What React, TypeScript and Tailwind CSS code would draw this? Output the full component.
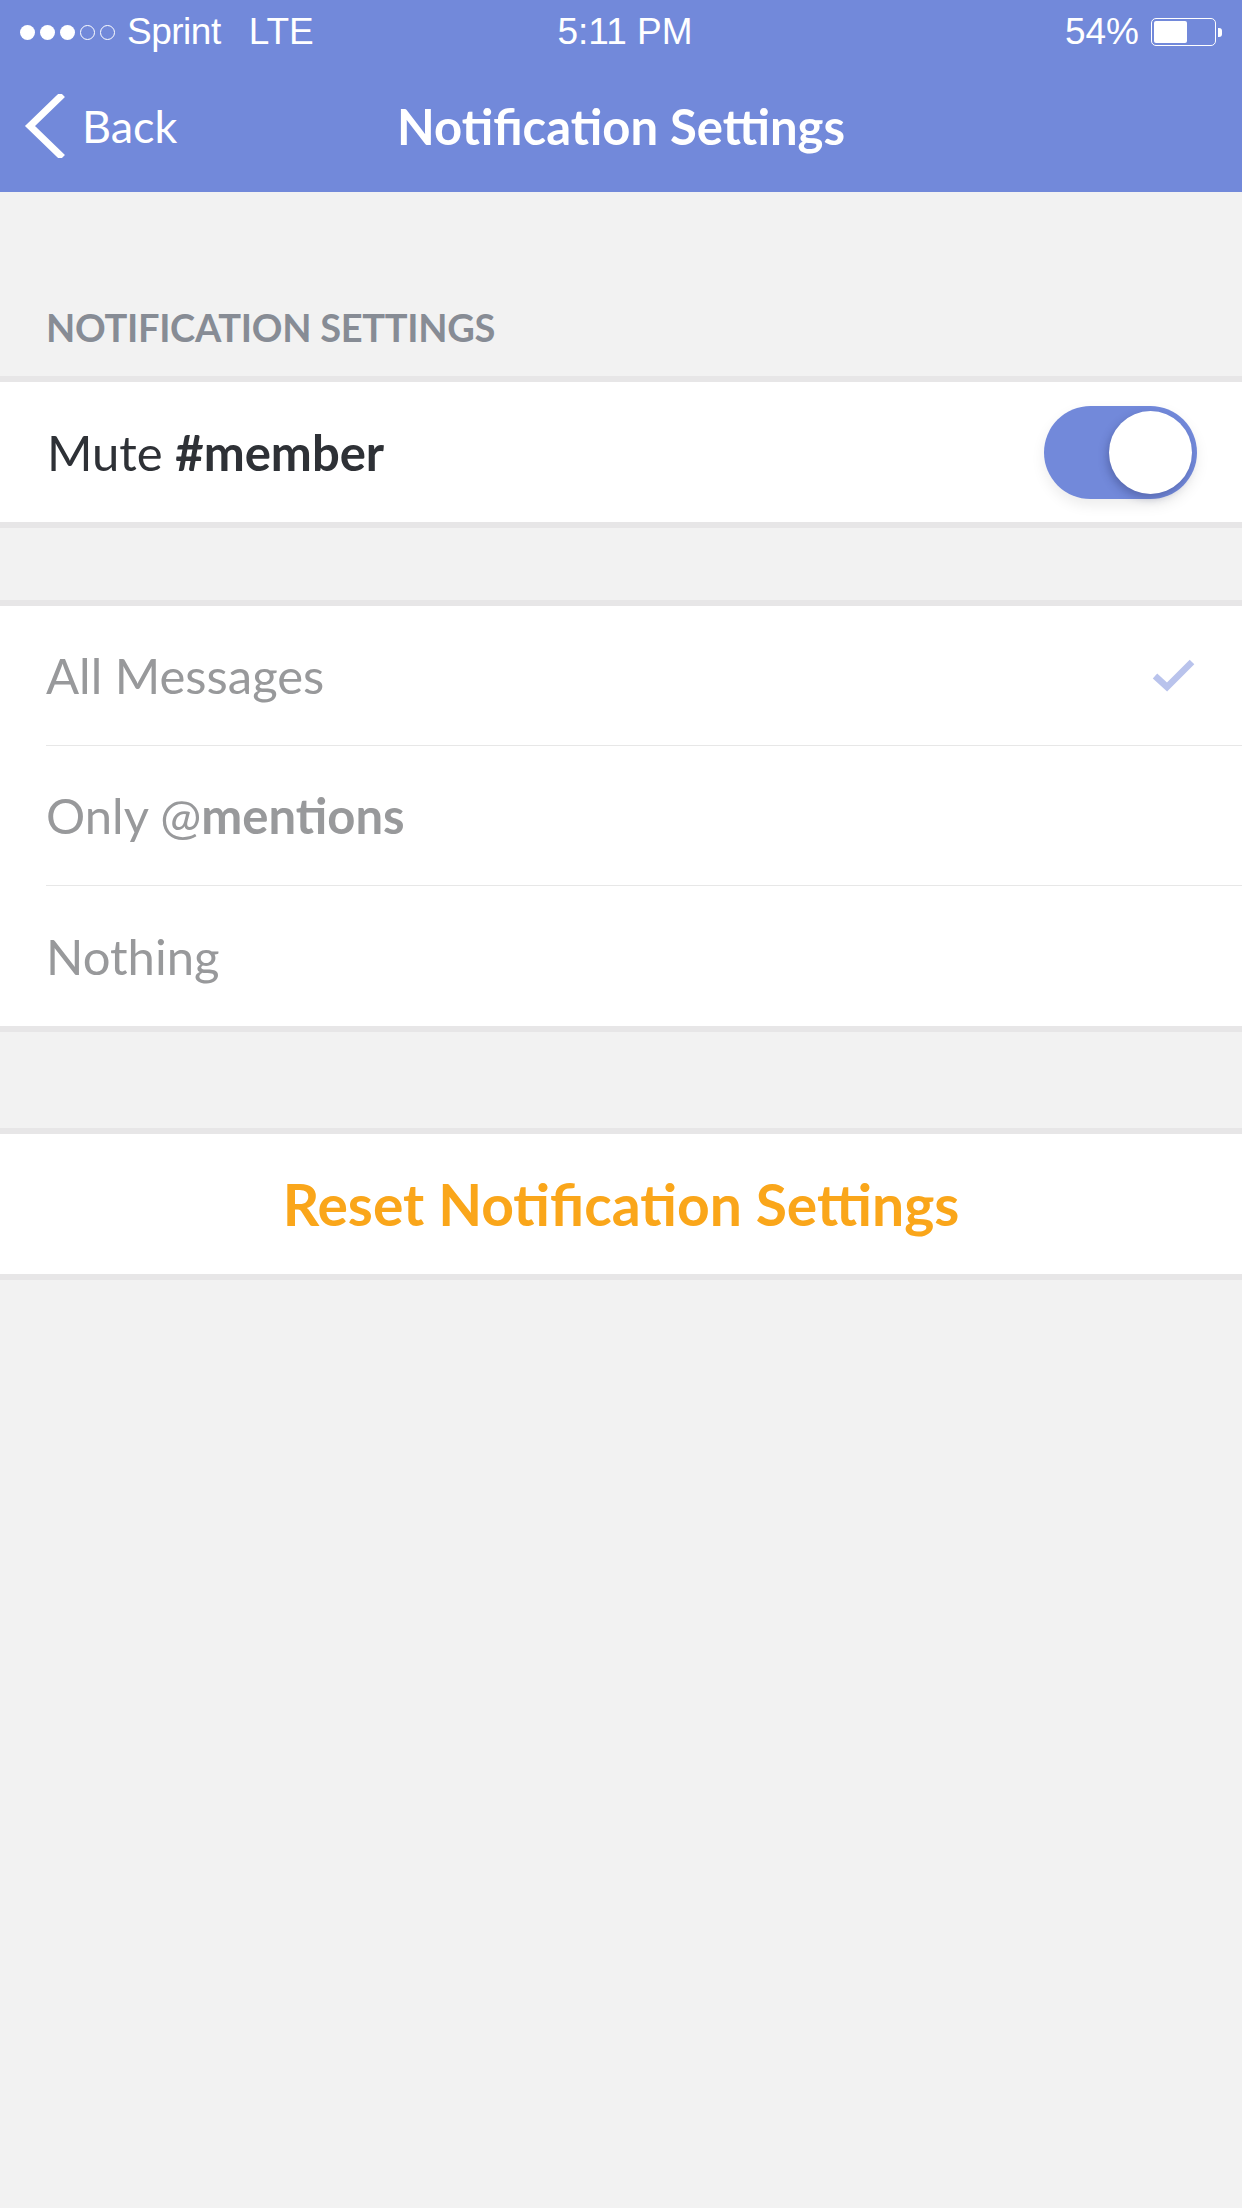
import React from "react";

const Dot = ({ filled }: { filled: boolean }) => (
  <span
    className={
      filled
        ? "w-[15px] h-[15px] rounded-full bg-white"
        : "w-[15px] h-[15px] rounded-full border-[1.5px] border-white"
    }
  />
);

const StatusBar = () => (
  <div className="h-[60px] pt-[4px] flex items-center px-[20px] text-white text-[37px] font-['Liberation_Sans',sans-serif] relative">
    <div className="flex items-center gap-[5px]">
      <Dot filled />
      <Dot filled />
      <Dot filled />
      <Dot filled={false} />
      <Dot filled={false} />
    </div>
    <span className="ml-[12px] tracking-[-0.5px]">Sprint</span>
    <span className="ml-[28px]">LTE</span>
    <span className="absolute left-0 right-0 text-center pl-[8px] pointer-events-none">5:11 PM</span>
    <div className="ml-auto flex items-center">
      <span className="mr-[12px]">54%</span>
      <div className="w-[65px] h-[28px] rounded-[5px] border-[1.5px] border-white p-[2px] flex">
        <div className="w-[33px] h-full bg-white rounded-[2px]" />
      </div>
      <div className="w-[4px] h-[9px] bg-white rounded-r-[3px] ml-[2px]" />
    </div>
  </div>
);

const NavBar = () => (
  <div className="h-[132px] relative flex items-center text-white">
    <div className="flex items-center pl-[24px]">
      <svg width="42" height="64" viewBox="0 0 42 64" fill="none">
        <path d="M36 3 L6 32 L36 61" stroke="white" strokeWidth="7" strokeLinecap="square" />
      </svg>
      <span className="ml-[16px] text-[45px] leading-none">Back</span>
    </div>
    <span className="absolute left-0 right-0 text-center text-[49px] font-bold leading-none pointer-events-none">
      Notification Settings
    </span>
  </div>
);

const Toggle = () => (
  <div className="relative w-[153px] h-[93px] rounded-full bg-[#7289da] shadow-[0_6px_14px_rgba(0,0,0,0.08)]">
    <div className="absolute right-[5px] top-[5px] w-[83px] h-[83px] rounded-full bg-white shadow-[-2px_4px_8px_rgba(40,50,100,0.35)]" />
  </div>
);

const Check = () => (
  <svg width="44" height="34" viewBox="0 0 44 34" fill="none">
    <path d="M3 17 L15 28 L40 3" stroke="#b9c3ec" strokeWidth="6.5" />
  </svg>
);

const options = ["All Messages", "Only", "Nothing"];

export default function App() {
  return (
    <div className="w-[1242px] min-h-[2208px] bg-[#f2f2f2] font-['Lato',sans-serif]">
      <div className="bg-[#7289da]">
        <StatusBar />
        <NavBar />
      </div>

      <div className="h-[184px] flex items-end pb-[30px] pl-[46px]">
        <span className="text-[38px] font-bold text-[#878c95] leading-none tracking-[-0.3px]">
          NOTIFICATION SETTINGS
        </span>
      </div>

      <div className="bg-white border-y-[6px] border-[#e7e6e7] h-[152px] flex items-center justify-between pl-[47px] pr-[45px]">
        <span className="text-[49px] text-[#2e3136] leading-none">
          Mute <span className="font-bold">#member</span>
        </span>
        <Toggle />
      </div>

      <div className="h-[72px]" />

      <div className="bg-white border-y-[6px] border-[#e7e6e7]">
        {options.map((label, i) => (
          <div key={label} className="pl-[46px]">
            <div
              className={
                i < options.length - 1
                  ? "h-[140px] flex items-center justify-between pr-[46px] border-b border-[#e7e7e7]"
                  : "h-[140px] flex items-center justify-between pr-[46px]"
              }
            >
              <span className="text-[49px] text-[#98999b] leading-none">
                {label === "Only" ? (
                  <>
                    Only @<span className="font-bold">mentions</span>
                  </>
                ) : (
                  label
                )}
              </span>
              {i === 0 && <Check />}
            </div>
          </div>
        ))}
      </div>

      <div className="h-[96px]" />

      <div className="bg-white border-y-[6px] border-[#e7e6e7] h-[152px] flex items-center justify-center">
        <span className="text-[57px] font-bold text-[#faa61a] leading-none">
          Reset Notification Settings
        </span>
      </div>
    </div>
  );
}
